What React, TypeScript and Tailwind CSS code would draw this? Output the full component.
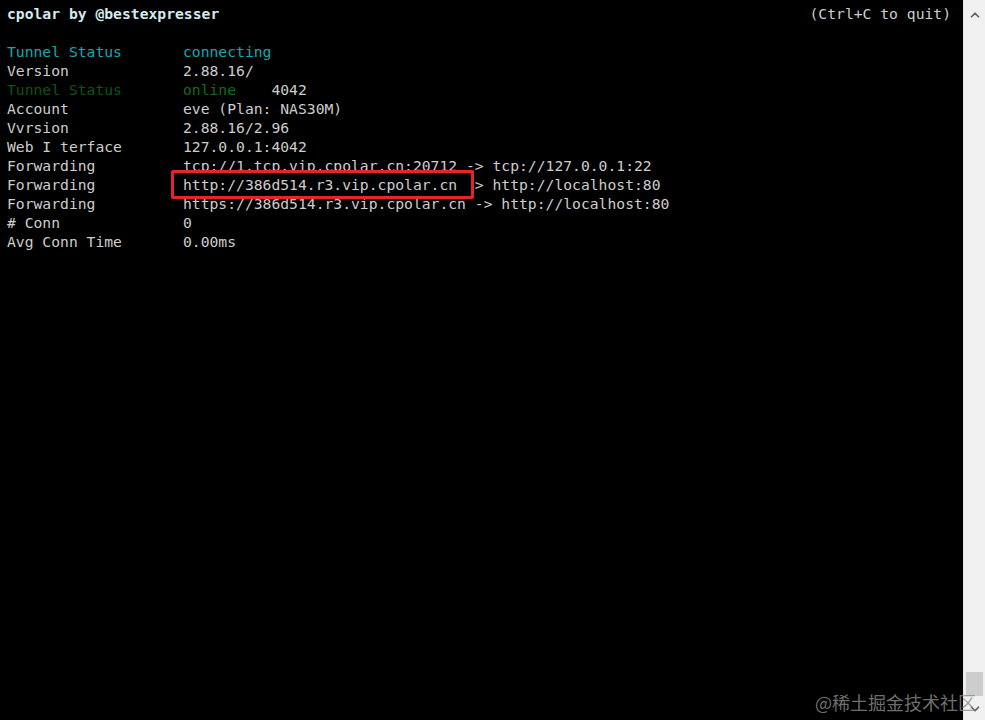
import { ChevronUp, ChevronDown } from "lucide-react";

const mono = "font-['DejaVu_Sans_Mono','Liberation_Mono',monospace]";

type Row = {
  label: string;
  value: string;
  labelClass?: string;
  valueClass?: string;
  extra?: string;
  boxed?: string;
};

const rows: Row[] = [
  { label: "Tunnel Status", value: "connecting", labelClass: "text-[#17a9b3]", valueClass: "text-[#17a9b3]" },
  { label: "Version", value: "2.88.16/" },
  { label: "Tunnel Status", value: "online", labelClass: "text-[#0f5316]", valueClass: "text-[#156a1d]", extra: "    4042" },
  { label: "Account", value: "eve (Plan: NAS30M)" },
  { label: "Vvrsion", value: "2.88.16/2.96" },
  { label: "Web I terface", value: "127.0.0.1:4042" },
  { label: "Forwarding", value: "tcp://1.tcp.vip.cpolar.cn:20712 -> tcp://127.0.0.1:22" },
  {
    label: "Forwarding",
    value: "http://386d514.r3.vip.cpolar.cn -> http://localhost:80",
    boxed: "http://386d514.r3.vip.cpolar.cn",
  },
  { label: "Forwarding", value: "https://386d514.r3.vip.cpolar.cn -> http://localhost:80" },
  { label: "# Conn", value: "0" },
  { label: "Avg Conn Time", value: "0.00ms" },
];

function TermRow({ row }: { row: Row }) {
  return (
    <div className="flex whitespace-pre">
      <span className={`w-[176px] shrink-0 ${row.labelClass ?? ""}`}>{row.label}</span>
      <span className="relative">
        <span className={row.valueClass}>{row.value}</span>
        {row.extra && <span>{row.extra}</span>}
        {row.boxed && (
          // red highlight box pasted over the line, hides a bit of the neighbours
          <span className="absolute left-[-12px] top-[-5px] z-10 h-[29px] w-[303px] rounded-[2px] border-[3px] border-[#e4252b] bg-black pl-[9px] leading-[23px]">
            {row.boxed}
          </span>
        )}
      </span>
    </div>
  );
}

export default function App() {
  return (
    <div className={`relative flex h-[720px] w-[985px] overflow-hidden bg-black ${mono}`}>
      <div className="flex-1 pl-[7px] pr-[12px] pt-[4px] text-[14.7px] leading-[19px] text-[#cdcdcd]">
        <div className="flex justify-between">
          <span className="font-bold text-[#d3eaee]">cpolar by @bestexpresser</span>
          <span>(Ctrl+C to quit)</span>
        </div>
        <div className="h-[19px]" />
        {rows.map((r, i) => (
          <TermRow key={i} row={r} />
        ))}
      </div>

      <div className="flex w-[22px] shrink-0 flex-col items-center justify-between border-l border-[#e6e6e6] bg-[#f0f0f0] pb-[4px] pt-[8px]">
        <ChevronUp size={14} strokeWidth={3} className="text-[#606060]" />
        <div className="flex w-full flex-col items-center gap-[6px]">
          <div className="h-[24px] w-[17px] bg-[#cdcdcd]" />
          <ChevronDown size={14} strokeWidth={3} className="text-[#606060]" />
        </div>
      </div>

      <div className="absolute bottom-[6px] right-[9px] font-['Noto_Sans_CJK_SC',sans-serif] text-[18px] leading-[24px] text-[#8c8c8c]/80">
        @稀土掘金技术社区
      </div>
    </div>
  );
}
